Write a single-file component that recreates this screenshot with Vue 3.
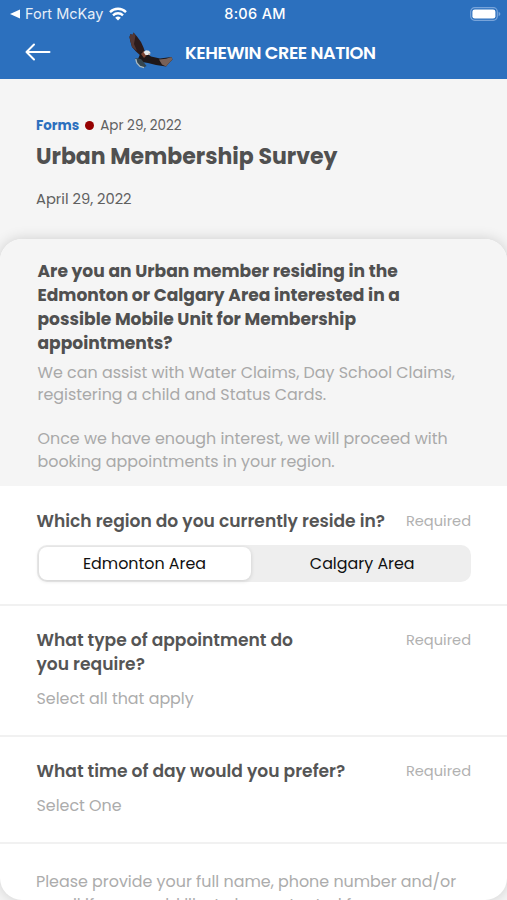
<template>
  <div class="screen">
    <header class="header">
      <div class="status-bar">
        <div class="status-left">
          <svg class="back-app" viewBox="0 0 10 10">
            <path d="M0 5 L10 0.6 V9.4 Z" fill="#fff" />
          </svg>
          <span class="carrier">Fort McKay</span>
          <svg class="wifi" viewBox="0 0 18 14">
            <g fill="none" stroke="#fff" stroke-width="2.4">
              <path d="M1 5.1 A11.4 11.4 0 0 1 17 5.1" />
              <path d="M4 8.3 A7.2 7.2 0 0 1 14 8.3" />
            </g>
            <path d="M9 13.6 L6.2 10.8 A4 4 0 0 1 11.8 10.8 Z" fill="#fff" />
          </svg>
        </div>
        <span class="clock">8:06 AM</span>
        <div class="status-right">
          <svg class="battery" viewBox="0 0 31 14">
            <rect x="0.7" y="0.7" width="26.6" height="12.6" rx="4" fill="none" stroke="#78a4da" stroke-width="1.2" />
            <rect x="2.4" y="2.4" width="23" height="9.2" rx="2.4" fill="#fff" />
            <path d="M28.6 4.8 Q30.4 5.6 30.4 7 Q30.4 8.4 28.6 9.2 Z" fill="#78a4da" />
          </svg>
        </div>
      </div>

      <div class="nav-bar">
        <button class="back" aria-label="Back">
          <svg viewBox="0 0 26 18">
            <path d="M9 1.5 L1.5 9 L9 16.5 M1.5 9 H24.5" fill="none" stroke="#fff" stroke-width="2" stroke-linecap="round" stroke-linejoin="round" />
          </svg>
        </button>
        <!-- eagle -->
        <svg class="logo" viewBox="0 0 46 40">
          <path d="M1.5 5 L2.5 2 L4.5 3 L5.5 0.5 L9 4.5 L13 10 L15.5 15.5 L17 20 L13 24 L8 19.5 L4 15 L2.3 9 Z" fill="#2c1b1b" />
          <path d="M1.5 5 L2.5 2 L4.5 3 L5.5 0.5 L7.5 3.5 L6 12 L9 19 L4 15 L2.3 9 Z" fill="#533734" />
          <path d="M13 20 L18 21 L23 24.5 L32 26.5 L43.5 25 L44.5 27.5 L41 31 L38 34.5 L28 33 L20 31 L14 30 L10 27 Z" fill="#1e1719" />
          <path d="M31 27.5 L38 26.8 L43.5 25 L44.5 27.5 L41 31 L38 34.5 L34 32.5 Z" fill="#786158" />
          <path d="M13 22 L16 19 L19 23 L16 26 Z" fill="#7c4534" />
          <path d="M7.5 26 L13 27 L15.5 30 L18.5 34 L15 36 L12 34.5 L8.5 31 Z" fill="#34454f" />
          <path d="M7.8 27 L8.8 31 L12 34.5 L16 35.6" fill="none" stroke="#a9bac2" stroke-width="1.3" />
          <path d="M15.5 20 L18 18.3 L21 18.8 L22.5 20.8 L20 23 L17.5 23 Z" fill="#e7eaec" />
          <path d="M20.5 21.5 L22.5 21 L22 23 L20 23 Z" fill="#c6aaa0" />
        </svg>
        <span class="brand">KEHEWIN CREE NATION</span>
      </div>
    </header>

    <section class="intro">
      <div class="meta">
        <span class="category">Forms</span>
        <span class="dot"></span>
        <span class="posted">Apr 29, 2022</span>
      </div>
      <h1 class="title">Urban Membership Survey</h1>
      <p class="date">April 29, 2022</p>
    </section>

    <main class="card">
      <section class="description">
        <h2>
          Are you an Urban member residing in the<br />
          Edmonton or Calgary Area interested in a<br />
          possible Mobile Unit for Membership<br />
          appointments?
        </h2>
        <p>
          We can assist with Water Claims, Day School Claims,<br />
          registering a child and Status Cards.
        </p>
        <p>
          Once we have enough interest, we will proceed with<br />
          booking appointments in your region.
        </p>
      </section>

      <section v-for="q in questions" :key="q.id" class="question" :class="q.id">
        <div class="question-head">
          <h3>
            <template v-for="(line, i) in q.title" :key="line">
              <br v-if="i > 0" />{{ line }}
            </template>
          </h3>
          <span class="required">Required</span>
        </div>
        <div v-if="q.options" class="segmented">
          <button
            v-for="option in q.options"
            :key="option"
            :class="{ active: option === region }"
            @click="region = option"
          >
            {{ option }}
          </button>
        </div>
        <p v-else class="hint">{{ q.hint }}</p>
      </section>

      <p class="contact">
        Please provide your full name, phone number and/or<br />
        email if you would like to be contacted for
      </p>
    </main>
  </div>
</template>

<script setup>
import { ref } from 'vue';

const region = ref('Edmonton Area');

const questions = [
  {
    id: 'region',
    title: ['Which region do you currently reside in?'],
    options: ['Edmonton Area', 'Calgary Area'],
  },
  {
    id: 'type',
    title: ['What type of appointment do', 'you require?'],
    hint: 'Select all that apply',
  },
  {
    id: 'time',
    title: ['What time of day would you prefer?'],
    hint: 'Select One',
  },
];
</script>

<style>
body {
  margin: 0;
  background: #f5f5f5;
}
</style>

<style scoped>
.screen {
  display: flex;
  flex-direction: column;
  width: 507px;
  height: 900px;
  overflow: hidden;
  background: #f5f5f5;
  font-family: Poppins, Inter, 'Liberation Sans', sans-serif;
  white-space: nowrap;
  color: #505050;
}

h1,
h2,
h3,
p {
  margin: 0;
}

button {
  padding: 0;
  border: 0;
  background: none;
  font: inherit;
  letter-spacing: inherit;
  cursor: pointer;
}

svg {
  display: block;
}

.header {
  flex: none;
  height: 79px;
  background: #2c70be;
  color: #fff;
}

.status-bar {
  display: grid;
  grid-template-columns: 1fr auto 1fr;
  align-items: center;
  height: 27px;
  padding: 0 7px 0 10px;
  font-family: Inter, 'Liberation Sans', sans-serif;
  font-size: 14.5px;
}

.status-left {
  display: flex;
  align-items: center;
}

.back-app {
  width: 10px;
  height: 10px;
  margin-right: 5px;
}

.carrier {
  width: 78px;
  color: #e6eef8;
}

.wifi {
  width: 18px;
  height: 14px;
  margin-left: 6px;
}

.clock {
  font-weight: 500;
  letter-spacing: 0.3px;
}

.status-right {
  display: flex;
  justify-content: flex-end;
  margin-right: -1px;
}

.battery {
  width: 31px;
  height: 14px;
}

.nav-bar {
  display: flex;
  align-items: center;
  height: 50px;
  padding-left: 25px;
}

.back svg {
  width: 26px;
  height: 18px;
}

.logo {
  width: 46px;
  height: 40px;
  margin: -1px 11px 0 77px;
}

.brand {
  font-size: 17.7px;
  font-weight: 600;
  letter-spacing: -0.45px;
}

.intro {
  flex: none;
  height: 160px;
  padding: 36px 36px 0;
  box-sizing: border-box;
}

.meta {
  display: flex;
  align-items: center;
  height: 21px;
  font-size: 13.5px;
}

.category {
  font-weight: 700;
  font-size: 13.4px;
  color: #2c70be;
}

.dot {
  width: 9px;
  height: 9px;
  margin: 0 6px;
  border-radius: 50%;
  background: #960000;
}

.posted {
  color: #606060;
}

.title {
  margin-top: 5px;
  font-size: 22px;
  font-weight: 700;
  line-height: 32px;
}

.date {
  margin-top: 16px;
  font-size: 14.7px;
  line-height: 21px;
  color: #606060;
}

.card {
  flex: none;
  height: 661px;
  overflow: hidden;
  border-radius: 22px;
  background: #fff;
  box-shadow: 0 0 14px rgba(0, 0, 0, 0.16);
}

.description {
  height: 247px;
  padding: 20px 37.5px 0;
  box-sizing: border-box;
  background: #f5f5f5;
}

.description h2 {
  margin-bottom: 7px;
  font-size: 17.1px;
  font-weight: 700;
  line-height: 24px;
}

.description p {
  margin-bottom: 22px;
  font-size: 15.9px;
  line-height: 22.2px;
  color: #a9a9a9;
}

.question {
  padding: 22px 36px 0 36.5px;
  box-sizing: border-box;
  border-bottom: 2px solid #f1f1f1;
}

.region {
  height: 120px;
  padding-top: 23px;
}

.type {
  height: 131px;
}

.time {
  height: 107px;
}

.question-head {
  display: flex;
  justify-content: space-between;
}

.question h3 {
  font-size: 17.1px;
  font-weight: 600;
  line-height: 24px;
  color: #555;
}

.required {
  font-size: 14.6px;
  line-height: 24px;
  color: #b1b1b1;
}

.segmented {
  display: grid;
  grid-template-columns: 212px 1fr;
  height: 37px;
  margin-top: 12px;
  padding: 2px;
  box-sizing: border-box;
  border-radius: 10px;
  background: #eee;
  font-size: 15.9px;
}

.segmented button {
  border-radius: 8px;
  color: #111;
}

.segmented button:last-child {
  padding-left: 5px;
}

.segmented button.active {
  background: #fff;
  box-shadow: 0 1px 4px rgba(0, 0, 0, 0.14);
}

.hint {
  margin-top: 12px;
  font-size: 15.9px;
  line-height: 22px;
  color: #acacac;
}

.contact {
  padding: 27px 36px 0;
  font-size: 15.9px;
  line-height: 22.6px;
  color: #acacac;
}
</style>
